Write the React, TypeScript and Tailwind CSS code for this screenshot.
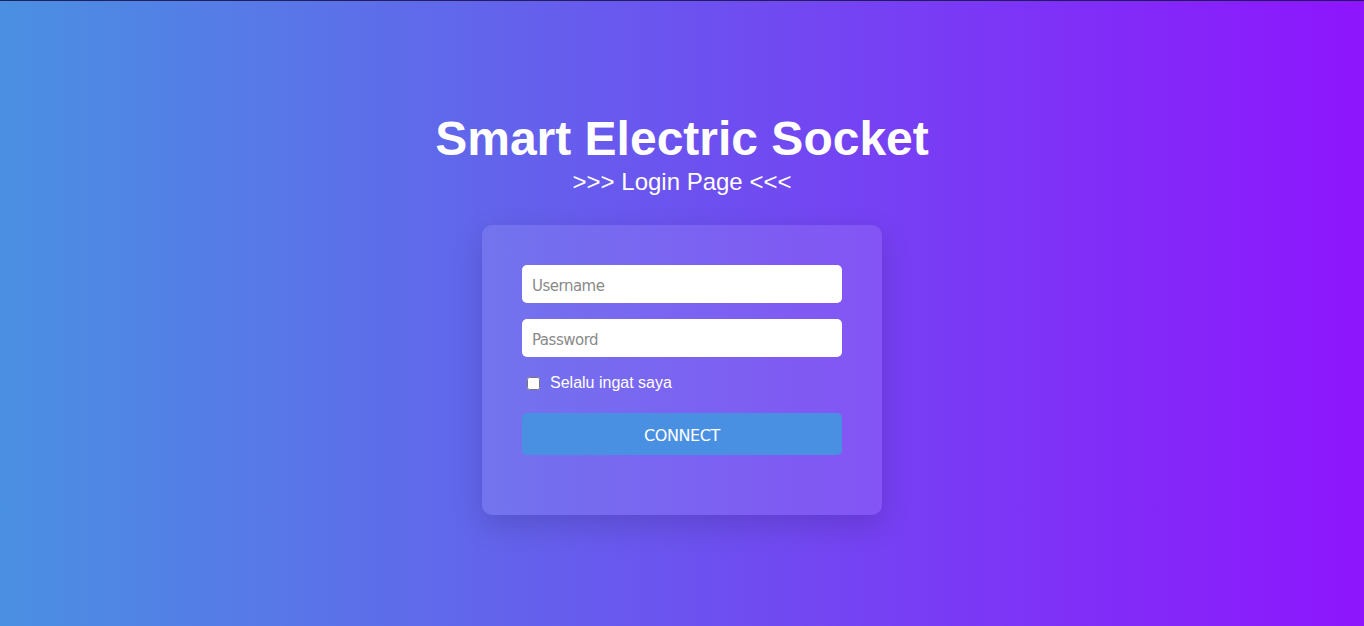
export default function App() {
  return (
    <div className="relative flex h-screen min-h-[626px] w-full flex-col items-center bg-[linear-gradient(to_right,#4a90e2,#8e15fd)] font-['Liberation_Sans',Arial,sans-serif] text-white">
      {/* thin dark strip at the very top */}
      <div className="absolute left-0 right-0 top-0 h-px bg-[#1c1650]/90" />

      <h1 className="mt-[111px] text-[48px] font-bold leading-[56px]">Smart Electric Socket</h1>
      <p className="mt-[1px] text-[24px] leading-[28px]">&gt;&gt;&gt; Login Page &lt;&lt;&lt;</p>

      <form
        onSubmit={(e) => e.preventDefault()}
        className="mt-[29px] flex w-[400px] flex-col rounded-[10px] bg-white/10 px-10 pb-[60px] pt-10 shadow-[0_10px_30px_rgba(0,0,0,0.15)]"
      >
        <input
          type="text"
          placeholder="Username"
          className="h-[38px] w-full rounded-[5px] bg-white px-[10px] pt-[3px] font-['DejaVu_Sans',Tahoma,sans-serif] text-[15px] tracking-[-0.5px] text-gray-700 outline-none placeholder:text-[#8a8a8a]"
        />
        <input
          type="password"
          placeholder="Password"
          className="mt-4 h-[38px] w-full rounded-[5px] bg-white px-[10px] pt-[3px] font-['DejaVu_Sans',Tahoma,sans-serif] text-[15px] tracking-[-0.5px] text-gray-700 outline-none placeholder:text-[#8a8a8a]"
        />
        <label className="mt-[14px] flex h-[24px] items-center gap-[10px] pl-[5px] text-base">
          <input type="checkbox" className="h-[13px] w-[13px] accent-white" />
          <span>Selalu ingat saya</span>
        </label>
        <button
          type="submit"
          className="mt-[18px] h-[42px] w-full rounded-[5px] bg-[#4a90e2] pt-[3px] font-['DejaVu_Sans',Tahoma,sans-serif] text-[16px] tracking-[-0.4px] text-white"
        >
          CONNECT
        </button>
      </form>
    </div>
  );
}
